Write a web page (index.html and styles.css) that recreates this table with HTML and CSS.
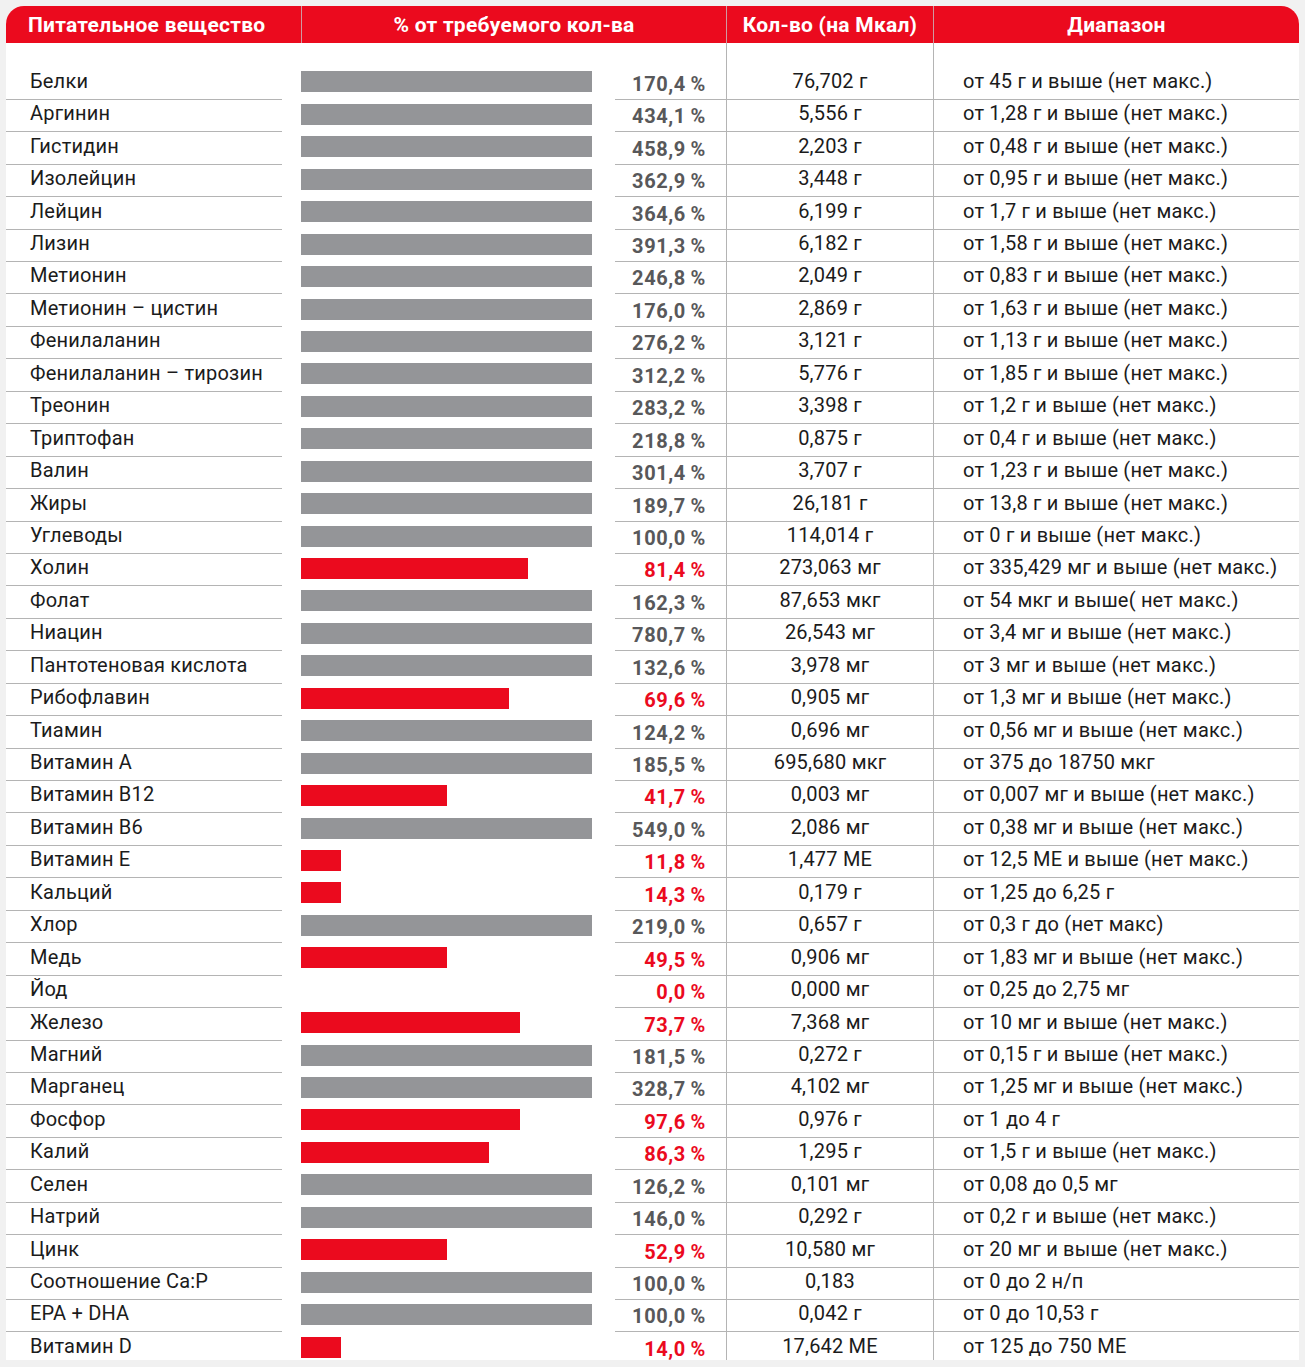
FILE: index.html
```html
<!DOCTYPE html>
<html lang="ru">
<head>
<meta charset="utf-8">
<title>Питательные вещества</title>
<link rel="stylesheet" href="styles.css">
</head>
<body>
<div class="card">
  <div class="head">
    <div class="h h-name">Питательное вещество</div>
    <div class="h">% от требуемого кол-ва</div>
    <div class="h">Кол-во (на Мкал)</div>
    <div class="h">Диапазон</div>
  </div>
  <div class="row spacer"><div class="name"></div><div></div><div class="barcell"></div><div></div><div class="pct"></div><div class="qty"></div><div class="range"></div></div>
  <div class="row"><div class="name">Белки</div><div></div><div class="barcell"><div class="bar"></div></div><div></div><div class="pct">170,4&thinsp;%</div><div class="qty">76,702 г</div><div class="range">от 45 г и выше (нет макс.)</div></div>
  <div class="row"><div class="name">Аргинин</div><div></div><div class="barcell"><div class="bar"></div></div><div></div><div class="pct">434,1&thinsp;%</div><div class="qty">5,556 г</div><div class="range">от 1,28 г и выше (нет макс.)</div></div>
  <div class="row"><div class="name">Гистидин</div><div></div><div class="barcell"><div class="bar"></div></div><div></div><div class="pct">458,9&thinsp;%</div><div class="qty">2,203 г</div><div class="range">от 0,48 г и выше (нет макс.)</div></div>
  <div class="row"><div class="name">Изолейцин</div><div></div><div class="barcell"><div class="bar"></div></div><div></div><div class="pct">362,9&thinsp;%</div><div class="qty">3,448 г</div><div class="range">от 0,95 г и выше (нет макс.)</div></div>
  <div class="row"><div class="name">Лейцин</div><div></div><div class="barcell"><div class="bar"></div></div><div></div><div class="pct">364,6&thinsp;%</div><div class="qty">6,199 г</div><div class="range">от 1,7 г и выше (нет макс.)</div></div>
  <div class="row"><div class="name">Лизин</div><div></div><div class="barcell"><div class="bar"></div></div><div></div><div class="pct">391,3&thinsp;%</div><div class="qty">6,182 г</div><div class="range">от 1,58 г и выше (нет макс.)</div></div>
  <div class="row"><div class="name">Метионин</div><div></div><div class="barcell"><div class="bar"></div></div><div></div><div class="pct">246,8&thinsp;%</div><div class="qty">2,049 г</div><div class="range">от 0,83 г и выше (нет макс.)</div></div>
  <div class="row"><div class="name">Метионин – цистин</div><div></div><div class="barcell"><div class="bar"></div></div><div></div><div class="pct">176,0&thinsp;%</div><div class="qty">2,869 г</div><div class="range">от 1,63 г и выше (нет макс.)</div></div>
  <div class="row"><div class="name">Фенилаланин</div><div></div><div class="barcell"><div class="bar"></div></div><div></div><div class="pct">276,2&thinsp;%</div><div class="qty">3,121 г</div><div class="range">от 1,13 г и выше (нет макс.)</div></div>
  <div class="row"><div class="name">Фенилаланин – тирозин</div><div></div><div class="barcell"><div class="bar"></div></div><div></div><div class="pct">312,2&thinsp;%</div><div class="qty">5,776 г</div><div class="range">от 1,85 г и выше (нет макс.)</div></div>
  <div class="row"><div class="name">Треонин</div><div></div><div class="barcell"><div class="bar"></div></div><div></div><div class="pct">283,2&thinsp;%</div><div class="qty">3,398 г</div><div class="range">от 1,2 г и выше (нет макс.)</div></div>
  <div class="row"><div class="name">Триптофан</div><div></div><div class="barcell"><div class="bar"></div></div><div></div><div class="pct">218,8&thinsp;%</div><div class="qty">0,875 г</div><div class="range">от 0,4 г и выше (нет макс.)</div></div>
  <div class="row"><div class="name">Валин</div><div></div><div class="barcell"><div class="bar"></div></div><div></div><div class="pct">301,4&thinsp;%</div><div class="qty">3,707 г</div><div class="range">от 1,23 г и выше (нет макс.)</div></div>
  <div class="row"><div class="name">Жиры</div><div></div><div class="barcell"><div class="bar"></div></div><div></div><div class="pct">189,7&thinsp;%</div><div class="qty">26,181 г</div><div class="range">от 13,8 г и выше (нет макс.)</div></div>
  <div class="row"><div class="name">Углеводы</div><div></div><div class="barcell"><div class="bar"></div></div><div></div><div class="pct">100,0&thinsp;%</div><div class="qty">114,014 г</div><div class="range">от 0 г и выше (нет макс.)</div></div>
  <div class="row"><div class="name">Холин</div><div></div><div class="barcell"><div class="bar low" style="width:227px"></div></div><div></div><div class="pct low">81,4&thinsp;%</div><div class="qty">273,063 мг</div><div class="range">от 335,429 мг и выше (нет макс.)</div></div>
  <div class="row"><div class="name">Фолат</div><div></div><div class="barcell"><div class="bar"></div></div><div></div><div class="pct">162,3&thinsp;%</div><div class="qty">87,653 мкг</div><div class="range">от 54 мкг и выше( нет макс.)</div></div>
  <div class="row"><div class="name">Ниацин</div><div></div><div class="barcell"><div class="bar"></div></div><div></div><div class="pct">780,7&thinsp;%</div><div class="qty">26,543 мг</div><div class="range">от 3,4 мг и выше (нет макс.)</div></div>
  <div class="row"><div class="name">Пантотеновая кислота</div><div></div><div class="barcell"><div class="bar"></div></div><div></div><div class="pct">132,6&thinsp;%</div><div class="qty">3,978 мг</div><div class="range">от 3 мг и выше (нет макс.)</div></div>
  <div class="row"><div class="name">Рибофлавин</div><div></div><div class="barcell"><div class="bar low" style="width:208px"></div></div><div></div><div class="pct low">69,6&thinsp;%</div><div class="qty">0,905 мг</div><div class="range">от 1,3 мг и выше (нет макс.)</div></div>
  <div class="row"><div class="name">Тиамин</div><div></div><div class="barcell"><div class="bar"></div></div><div></div><div class="pct">124,2&thinsp;%</div><div class="qty">0,696 мг</div><div class="range">от 0,56 мг и выше (нет макс.)</div></div>
  <div class="row"><div class="name">Витамин A</div><div></div><div class="barcell"><div class="bar"></div></div><div></div><div class="pct">185,5&thinsp;%</div><div class="qty">695,680 мкг</div><div class="range">от 375 до 18750 мкг</div></div>
  <div class="row"><div class="name">Витамин B12</div><div></div><div class="barcell"><div class="bar low" style="width:146px"></div></div><div></div><div class="pct low">41,7&thinsp;%</div><div class="qty">0,003 мг</div><div class="range">от 0,007 мг и выше (нет макс.)</div></div>
  <div class="row"><div class="name">Витамин B6</div><div></div><div class="barcell"><div class="bar"></div></div><div></div><div class="pct">549,0&thinsp;%</div><div class="qty">2,086 мг</div><div class="range">от 0,38 мг и выше (нет макс.)</div></div>
  <div class="row"><div class="name">Витамин E</div><div></div><div class="barcell"><div class="bar low" style="width:40px"></div></div><div></div><div class="pct low">11,8&thinsp;%</div><div class="qty">1,477 МЕ</div><div class="range">от 12,5 МЕ и выше (нет макс.)</div></div>
  <div class="row"><div class="name">Кальций</div><div></div><div class="barcell"><div class="bar low" style="width:40px"></div></div><div></div><div class="pct low">14,3&thinsp;%</div><div class="qty">0,179 г</div><div class="range">от 1,25 до 6,25 г</div></div>
  <div class="row"><div class="name">Хлор</div><div></div><div class="barcell"><div class="bar"></div></div><div></div><div class="pct">219,0&thinsp;%</div><div class="qty">0,657 г</div><div class="range">от 0,3 г до (нет макс)</div></div>
  <div class="row"><div class="name">Медь</div><div></div><div class="barcell"><div class="bar low" style="width:146px"></div></div><div></div><div class="pct low">49,5&thinsp;%</div><div class="qty">0,906 мг</div><div class="range">от 1,83 мг и выше (нет макс.)</div></div>
  <div class="row"><div class="name">Йод</div><div></div><div class="barcell"></div><div></div><div class="pct low">0,0&thinsp;%</div><div class="qty">0,000 мг</div><div class="range">от 0,25 до 2,75 мг</div></div>
  <div class="row"><div class="name">Железо</div><div></div><div class="barcell"><div class="bar low" style="width:219px"></div></div><div></div><div class="pct low">73,7&thinsp;%</div><div class="qty">7,368 мг</div><div class="range">от 10 мг и выше (нет макс.)</div></div>
  <div class="row"><div class="name">Магний</div><div></div><div class="barcell"><div class="bar"></div></div><div></div><div class="pct">181,5&thinsp;%</div><div class="qty">0,272 г</div><div class="range">от 0,15 г и выше (нет макс.)</div></div>
  <div class="row"><div class="name">Марганец</div><div></div><div class="barcell"><div class="bar"></div></div><div></div><div class="pct">328,7&thinsp;%</div><div class="qty">4,102 мг</div><div class="range">от 1,25 мг и выше (нет макс.)</div></div>
  <div class="row"><div class="name">Фосфор</div><div></div><div class="barcell"><div class="bar low" style="width:219px"></div></div><div></div><div class="pct low">97,6&thinsp;%</div><div class="qty">0,976 г</div><div class="range">от 1 до 4 г</div></div>
  <div class="row"><div class="name">Калий</div><div></div><div class="barcell"><div class="bar low" style="width:188px"></div></div><div></div><div class="pct low">86,3&thinsp;%</div><div class="qty">1,295 г</div><div class="range">от 1,5 г и выше (нет макс.)</div></div>
  <div class="row"><div class="name">Селен</div><div></div><div class="barcell"><div class="bar"></div></div><div></div><div class="pct">126,2&thinsp;%</div><div class="qty">0,101 мг</div><div class="range">от 0,08 до 0,5 мг</div></div>
  <div class="row"><div class="name">Натрий</div><div></div><div class="barcell"><div class="bar"></div></div><div></div><div class="pct">146,0&thinsp;%</div><div class="qty">0,292 г</div><div class="range">от 0,2 г и выше (нет макс.)</div></div>
  <div class="row"><div class="name">Цинк</div><div></div><div class="barcell"><div class="bar low" style="width:146px"></div></div><div></div><div class="pct low">52,9&thinsp;%</div><div class="qty">10,580 мг</div><div class="range">от 20 мг и выше (нет макс.)</div></div>
  <div class="row"><div class="name">Соотношение Ca:P</div><div></div><div class="barcell"><div class="bar"></div></div><div></div><div class="pct">100,0&thinsp;%</div><div class="qty">0,183</div><div class="range">от 0 до 2 н/п</div></div>
  <div class="row"><div class="name">EPA + DHA</div><div></div><div class="barcell"><div class="bar"></div></div><div></div><div class="pct">100,0&thinsp;%</div><div class="qty">0,042 г</div><div class="range">от 0 до 10,53 г</div></div>
  <div class="row last"><div class="name">Витамин D</div><div></div><div class="barcell"><div class="bar low" style="width:40px"></div></div><div></div><div class="pct low">14,0&thinsp;%</div><div class="qty">17,642 МЕ</div><div class="range">от 125 до 750 МЕ</div></div>
</div>
</body>
</html>
```

FILE: styles.css
```css
* { box-sizing: border-box; }
html, body { margin: 0; padding: 0; }
body {
  background: #f1f1f1;
  font-family: Roboto, "Liberation Sans", sans-serif;
  color: #1b1b1b;
}
.card {
  margin: 6px;
  width: 1293px;
  height: 1354px;
  background: #fff;
  border-radius: 18px 18px 0 0;
  overflow: hidden;
}
.head {
  display: grid;
  grid-template-columns: 295px 425px 207px 366px;
  height: 37px;
  background: #eb0a1e;
  color: #fff;
  font-weight: 700;
  font-size: 21px;
  letter-spacing: 0.25px;
}
.h {
  display: flex;
  align-items: center;
  justify-content: center;
  padding-top: 1px;
  border-left: 1px solid #cf9aa1;
}
.h-name {
  border-left: none;
  justify-content: flex-start;
  padding-left: 22px;
}
.row {
  display: grid;
  grid-template-columns: 276px 19px 291px 23px 111px 207px 366px;
  height: 32.45px;
  font-size: 20px;
  line-height: 30px;
  letter-spacing: 0.2px;
  white-space: nowrap;
}
.row.spacer { height: 22.85px; }
.name {
  padding-left: 24px;
  border-bottom: 1px solid #b4b4b4;
}
.barcell { padding-top: 5.6px; }
.bar {
  height: 21px;
  width: 291px;
  background: #949598;
}
.bar.low { background: #eb0a1e; }
.pct {
  text-align: right;
  padding-right: 20px;
  padding-top: 3px;
  font-weight: 700;
  color: #58585a;
  letter-spacing: 0.6px;
  border-bottom: 1px solid #b4b4b4;
}
.pct.low { color: #eb0a1e; }
.qty {
  text-align: center;
  border-left: 1px solid #b4b4b4;
  border-bottom: 1px solid #b4b4b4;
}
.range {
  padding-left: 29px;
  border-left: 1px solid #b4b4b4;
  border-bottom: 1px solid #b4b4b4;
}
.spacer .name, .spacer .pct, .spacer .qty, .spacer .range,
.last .name, .last .pct, .last .qty, .last .range { border-bottom: none; }
```
